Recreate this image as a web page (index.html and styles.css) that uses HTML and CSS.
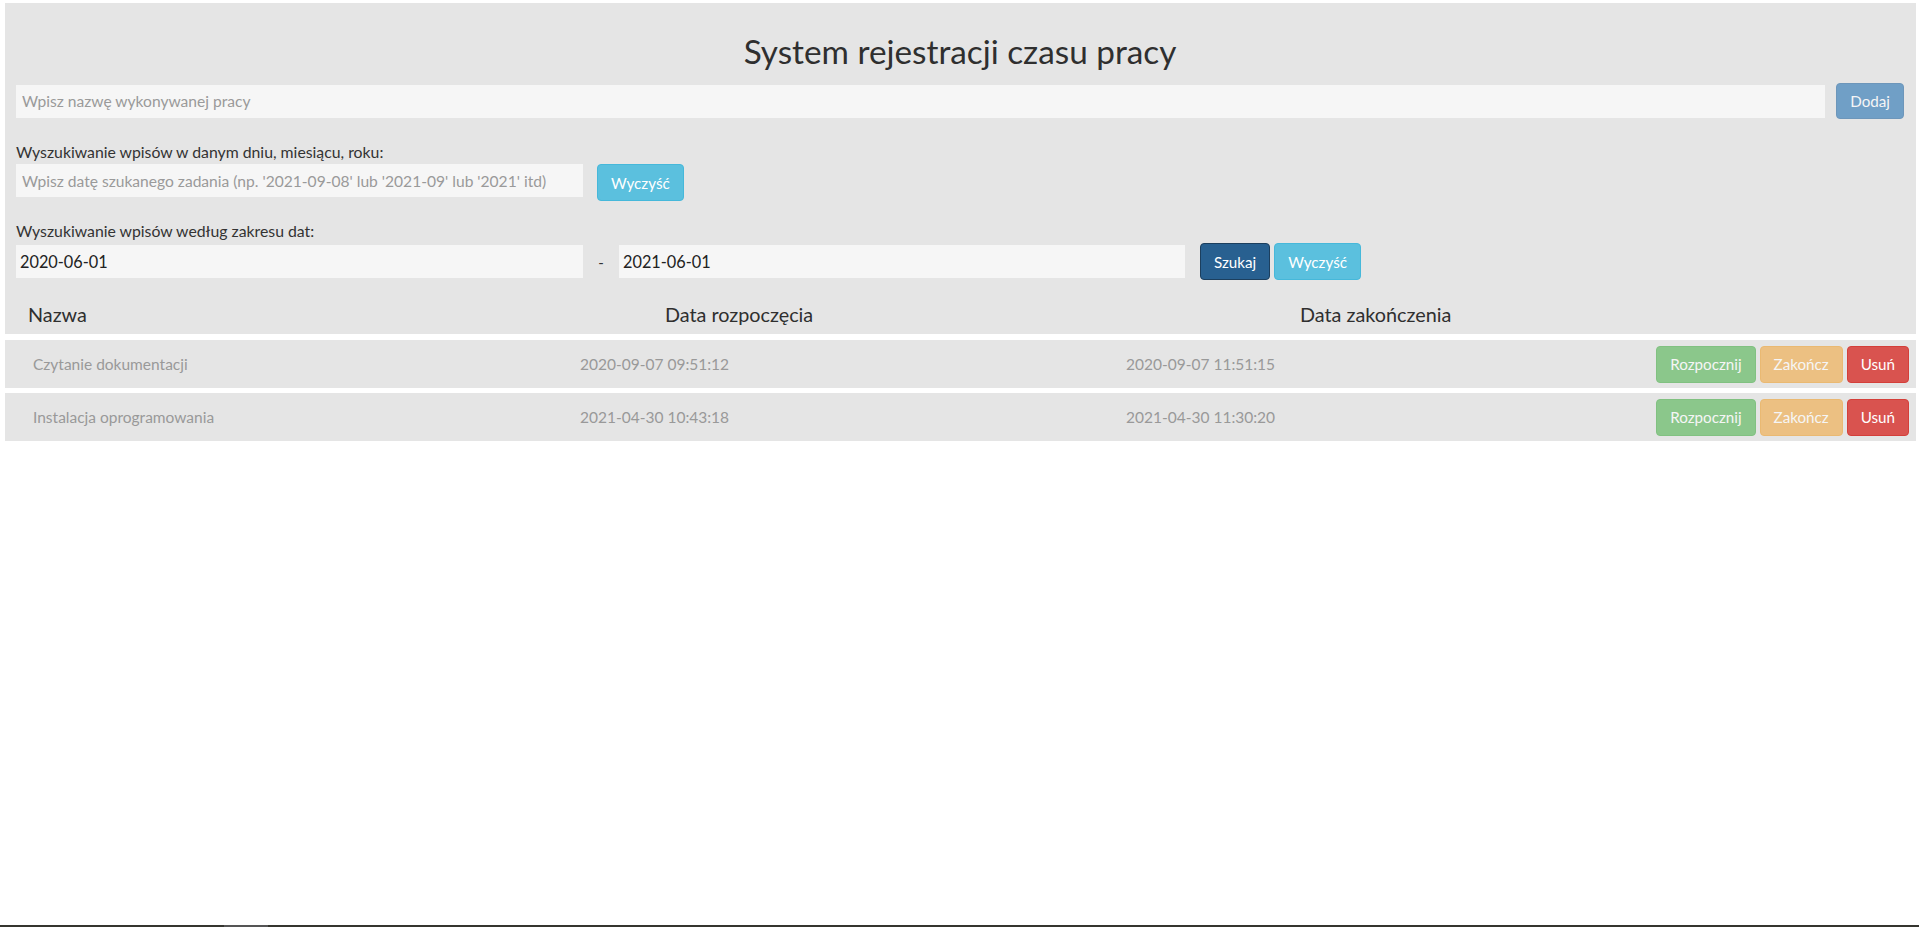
FILE: index.html
```html
<!DOCTYPE html>
<html lang="pl">
<head>
<meta charset="utf-8">
<title>System rejestracji czasu pracy</title>
<link rel="stylesheet" href="styles.css">
</head>
<body>
<div class="panel">
  <h1 class="title">System rejestracji czasu pracy</h1>
  <div class="add-row">
    <input class="field field-grow" type="text" placeholder="Wpisz nazwę wykonywanej pracy">
    <button class="btn btn-primary btn-faded btn-add">Dodaj</button>
  </div>

  <div class="search-block search-day">
    <label class="search-label">Wyszukiwanie wpisów w danym dniu, miesiącu, roku:</label>
    <div class="search-row">
      <input class="field field-half" type="text" placeholder="Wpisz datę szukanego zadania (np. '2021-09-08' lub '2021-09' lub '2021' itd)">
      <button class="btn btn-info">Wyczyść</button>
    </div>
  </div>

  <div class="search-block search-range">
    <label class="search-label">Wyszukiwanie wpisów według zakresu dat:</label>
    <div class="range-row">
      <input class="field field-half field-value" type="text" value="2020-06-01">
      <span class="dash">-</span>
      <input class="field field-half2 field-value" type="text" value="2021-06-01">
      <div class="btn-group">
        <button class="btn btn-dark">Szukaj</button>
        <button class="btn btn-info">Wyczyść</button>
      </div>
    </div>
  </div>

  <div class="table-head">
    <div class="th">Nazwa</div>
    <div class="th">Data rozpoczęcia</div>
    <div class="th">Data zakończenia</div>
  </div>
</div>

<div class="entries">
  <div class="entry">
    <div class="cell">Czytanie dokumentacji</div>
    <div class="cell">2020-09-07 09:51:12</div>
    <div class="cell">2020-09-07 11:51:15</div>
    <div class="actions">
      <button class="btn btn-success btn-faded">Rozpocznij</button>
      <button class="btn btn-warning btn-faded">Zakończ</button>
      <button class="btn btn-danger">Usuń</button>
    </div>
  </div>
  <div class="entry">
    <div class="cell">Instalacja oprogramowania</div>
    <div class="cell">2021-04-30 10:43:18</div>
    <div class="cell">2021-04-30 11:30:20</div>
    <div class="actions">
      <button class="btn btn-success btn-faded">Rozpocznij</button>
      <button class="btn btn-warning btn-faded">Zakończ</button>
      <button class="btn btn-danger">Usuń</button>
    </div>
  </div>
</div>

<div class="screen-edge"><span class="screen-edge-mark"></span></div>
</body>
</html>
```
FILE: styles.css
```css
* { box-sizing: border-box; }

html, body {
  margin: 0;
  padding: 0;
  background: #ffffff;
}

body {
  font-family: "Lato", "Open Sans", sans-serif;
  color: #333333;
}

.panel {
  margin: 3px 3px 0 5px;
  background: #e5e5e5;
  padding: 28px 12px 8px 11px;
}

.title {
  margin: 0;
  font-size: 33.3px;
  line-height: 40px;
  font-weight: 400;
  text-align: center;
  color: #2f2f2f;
}

.add-row {
  margin-top: 12px;
  display: flex;
  align-items: center;
  gap: 11px;
}

.field {
  height: 33px;
  border: none;
  outline: none;
  background: #f6f6f6;
  padding: 0 6px;
  font-family: "Lato", "Open Sans", sans-serif;
  font-size: 15.6px;
  color: #222222;
  border-radius: 0;
}

.field::placeholder {
  color: #9a9a9a;
  opacity: 1;
}

.field-value {
  font-size: 16.3px;
  padding-left: 4px;
}

.field-grow { flex: 1; }
.field-half { width: 567px; }
.field-half2 { width: 566px; }

.btn {
  height: 37px;
  padding: 0 13px;
  border: 1px solid transparent;
  border-radius: 4px;
  font-family: "Lato", "Open Sans", sans-serif;
  font-size: 15.2px;
  color: #ffffff;
  cursor: pointer;
  white-space: nowrap;
}

.btn-add { height: 36px; }

.btn-faded { opacity: 0.65; }

.btn-primary { background: #337ab7; border-color: #2e6da4; }
.btn-info { background: #5bc0de; border-color: #46b8da; }
.btn-dark { background: #286090; border-color: #1c3f5e; }
.btn-success { background: #5cb85c; border-color: #4cae4c; }
.btn-warning { background: #f0ad4e; border-color: #eea236; }
.btn-danger { background: #d9534f; border-color: #d43f3a; }

.search-block { display: flex; flex-direction: column; }

.search-day { margin-top: 23px; }
.search-range { margin-top: 20px; }

.search-label {
  font-size: 15.8px;
  line-height: 20px;
  margin-bottom: 2px;
  color: #333333;
}

.search-row {
  display: flex;
  align-items: flex-start;
  gap: 14px;
}

.range-row {
  display: flex;
  align-items: center;
}

.dash {
  width: 36px;
  text-align: center;
  font-size: 15px;
  color: #333333;
}

.btn-group {
  margin-left: 15px;
  display: flex;
  gap: 4px;
}

.table-head {
  margin-top: 22px;
  display: grid;
  grid-template-columns: 637px 635px 1fr;
  padding-left: 12px;
}

.th {
  font-size: 19.8px;
  line-height: 24px;
  color: #2f2f2f;
}

.entries {
  margin: 6px 3px 0 5px;
  display: flex;
  flex-direction: column;
  gap: 5px;
}

.entry {
  height: 48px;
  background: #e5e5e5;
  display: grid;
  grid-template-columns: 547px 546px 1fr auto;
  align-items: center;
  padding: 0 7px 0 28px;
}

.cell {
  font-size: 15.5px;
  color: #999999;
}

.actions {
  display: flex;
  gap: 4px;
}

.screen-edge {
  position: fixed;
  left: 0;
  right: 0;
  bottom: 0;
  height: 2px;
  background: #35352f;
}

.screen-edge-mark {
  position: absolute;
  left: 224px;
  top: 0;
  width: 44px;
  height: 2px;
  background: #555555;
}
```
